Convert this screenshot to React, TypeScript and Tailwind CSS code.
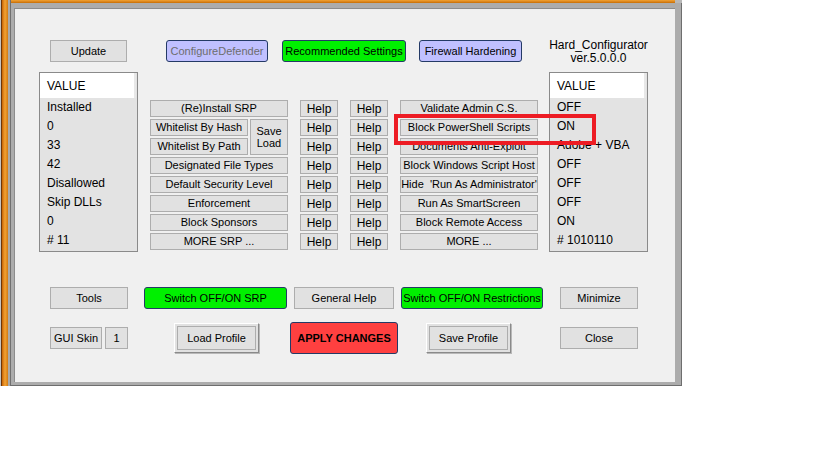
import type { ReactNode } from 'react';
import clsx from 'clsx';

// grey flat WinForms-style button
function Btn({ children, className }: { children: ReactNode; className?: string }) {
  return (
    <div
      className={clsx(
        'flex items-center justify-center whitespace-pre border border-[#adadad] bg-[#e1e1e1] text-[11px] leading-none text-black overflow-hidden',
        className
      )}
    >
      {children}
    </div>
  );
}

// coloured rounded button (green / lavender / red)
function ColorBtn({ children, className }: { children: ReactNode; className?: string }) {
  return (
    <div
      className={clsx(
        'flex items-center justify-center whitespace-nowrap rounded-[3px] border border-[#243a66] text-[11px] leading-none',
        className
      )}
    >
      {children}
    </div>
  );
}

// raised 3D button with focus frame
function RaisedBtn({ children }: { children: ReactNode }) {
  return (
    <div className="h-[30px] w-[85px] border border-t-white border-l-white border-b-[#8a8a8a] border-r-[#8a8a8a] bg-[#e1e1e1] p-[2px] shadow-[1px_1px_0_#b8b8b8]">
      <div className="flex h-full items-center justify-center border border-[#adadad] text-[11px] leading-none text-black">
        {children}
      </div>
    </div>
  );
}

function ValueList({ rows, className }: { rows: string[]; className?: string }) {
  return (
    <div className={clsx('flex h-[180px] w-[99px] flex-col border border-[#8a8a8a] bg-[#e3e3e3]', className)}>
      <div className="flex h-[25px] w-[96px] items-center border-r-2 border-[#e8e8e8] bg-white pl-[7px] text-[12px] text-black">
        VALUE
      </div>
      {rows.map((r, i) => (
        <div key={i} className="h-[19px] pl-[7px] text-[12px] leading-[19px] text-black whitespace-nowrap">
          {r}
        </div>
      ))}
    </div>
  );
}

const leftValues = ['Installed', '0', '33', '42', 'Disallowed', 'Skip DLLs', '0', '# 11'];
const rightValues = ['OFF', 'ON', 'Adobe + VBA', 'OFF', 'OFF', 'OFF', 'ON', '# 1010110'];

const srpRest = ['Designated File Types', 'Default Security Level', 'Enforcement', 'Block Sponsors', 'MORE SRP ...'];
const restrictions = [
  'Validate Admin C.S.',
  'Block PowerShell Scripts',
  'Documents Anti-Exploit',
  'Block Windows Script Host',
  "Hide  'Run As Administrator'",
  'Run As SmartScreen',
  'Block Remote Access',
  'MORE ...',
];

export default function App() {
  return (
    <div className="relative h-[460px] w-[819px] overflow-hidden bg-white font-['Liberation_Sans',Arial,sans-serif]">
      {/* Window frame */}
      <div className="flex h-[386px] w-[682px]">
        {/* left orange bar */}
        <div className="flex h-full">
          <div className="w-px bg-[#c4c4c4]" />
          <div className="w-px bg-[#6e3608]" />
          <div className="w-[6px] bg-gradient-to-r from-[#c86400] via-[#f2a232] to-[#d27a12]" />
          <div className="w-[2px] bg-[#a9a9a9]" />
          <div className="w-px bg-[#707070]" />
        </div>

        <div className="flex flex-1 flex-col">
          {/* top orange strip */}
          <div className="flex h-[3px]">
            <div className="flex-1 bg-gradient-to-b from-[#f2a232] to-[#c86e00]" />
            <div className="w-[7px] bg-[#b8b8b8]" />
          </div>

          {/* grey frame */}
          <div className="flex flex-1 flex-col border-r border-b border-[#6e6e6e] bg-[#acacac] pt-[5px] pl-[3px] pr-[6px] pb-[3px]">
            {/* client area */}
            <div className="flex flex-1 flex-col border-t border-l border-[#8c8c8c] bg-[#f0f0f0]">
              {/* Row A */}
              <div className="mt-[31px] flex h-[22px] items-start pl-[35px]">
                <Btn className="h-[22px] w-[77px]">Update</Btn>
                <ColorBtn className="ml-[39px] h-[22px] w-[102px] bg-[#c0c0ff] text-[#6d6d6d] border-[#5a6282]">
                  ConfigureDefender
                </ColorBtn>
                <ColorBtn className="ml-[14px] h-[22px] w-[124px] bg-[#00f000] text-black">Recommended Settings</ColorBtn>
                <ColorBtn className="ml-[13px] h-[22px] w-[103px] bg-[#c0c0ff] text-black">Firewall Hardening</ColorBtn>
                <div className="-mt-px ml-[27px] w-[99px] shrink-0 text-center text-[12px] leading-[13px] text-black">
                  <div>Hard_Configurator</div>
                  <div>ver.5.0.0.0</div>
                </div>
              </div>

              {/* Row B */}
              <div className="mt-[10px] flex items-start pl-[24px]">
                <ValueList rows={leftValues} />

                <div className="ml-[12px] mt-[28px] flex gap-[12px]">
                  {/* SRP column */}
                  <div className="flex w-[138px] flex-col gap-[2px]">
                    <Btn className="h-[17px]">(Re)Install SRP</Btn>
                    <div className="flex gap-[2px]">
                      <div className="flex w-[98px] flex-col gap-[2px]">
                        <Btn className="h-[17px]">Whitelist By Hash</Btn>
                        <Btn className="h-[17px]">Whitelist By Path</Btn>
                      </div>
                      <Btn className="h-[36px] w-[38px] flex-col !leading-[12px]">
                        <span>Save</span>
                        <span>Load</span>
                      </Btn>
                    </div>
                    {srpRest.map((t) => (
                      <Btn key={t} className="h-[17px]">
                        {t}
                      </Btn>
                    ))}
                  </div>

                  {/* Help columns */}
                  {[0, 1].map((c) => (
                    <div key={c} className="flex w-[38px] flex-col gap-[2px]">
                      {restrictions.map((_, i) => (
                        <Btn key={i} className="h-[17px] text-[12px]">
                          Help
                        </Btn>
                      ))}
                    </div>
                  ))}

                  {/* Restrictions column */}
                  <div className="flex w-[138px] flex-col gap-[2px]">
                    {restrictions.map((t) => (
                      <Btn key={t} className="h-[17px]">
                        {t}
                      </Btn>
                    ))}
                  </div>
                </div>

                <ValueList rows={rightValues} className="ml-[11px]" />
              </div>

              {/* Row C */}
              <div className="mt-[35px] flex items-center pl-[35px]">
                <Btn className="h-[22px] w-[78px]">Tools</Btn>
                <ColorBtn className="ml-[16px] h-[22px] w-[143px] bg-[#00f000] text-black">Switch OFF/ON SRP</ColorBtn>
                <Btn className="ml-[7px] h-[22px] w-[100px]">General Help</Btn>
                <ColorBtn className="ml-[7px] h-[22px] w-[142px] bg-[#00f000] text-black">
                  Switch OFF/ON Restrictions
                </ColorBtn>
                <Btn className="ml-[17px] h-[22px] w-[78px]">Minimize</Btn>
              </div>

              {/* Row D */}
              <div className="mt-[13px] flex h-[32px] items-center pl-[35px]">
                <Btn className="h-[22px] w-[52px]">GUI Skin</Btn>
                <Btn className="ml-[3px] h-[22px] w-[23px]">1</Btn>
                <div className="ml-[46px]">
                  <RaisedBtn>Load Profile</RaisedBtn>
                </div>
                <ColorBtn className="ml-[31px] h-[32px] w-[108px] bg-[#ff4040] font-bold text-black">
                  APPLY CHANGES
                </ColorBtn>
                <div className="ml-[28px]">
                  <RaisedBtn>Save Profile</RaisedBtn>
                </div>
                <Btn className="ml-[49px] h-[22px] w-[78px]">Close</Btn>
              </div>
            </div>
          </div>
        </div>
      </div>

      {/* red annotation box */}
      <div className="absolute left-[394px] top-[114px] h-[31px] w-[202px] border-4 border-[#ed1c24]" />
    </div>
  );
}
